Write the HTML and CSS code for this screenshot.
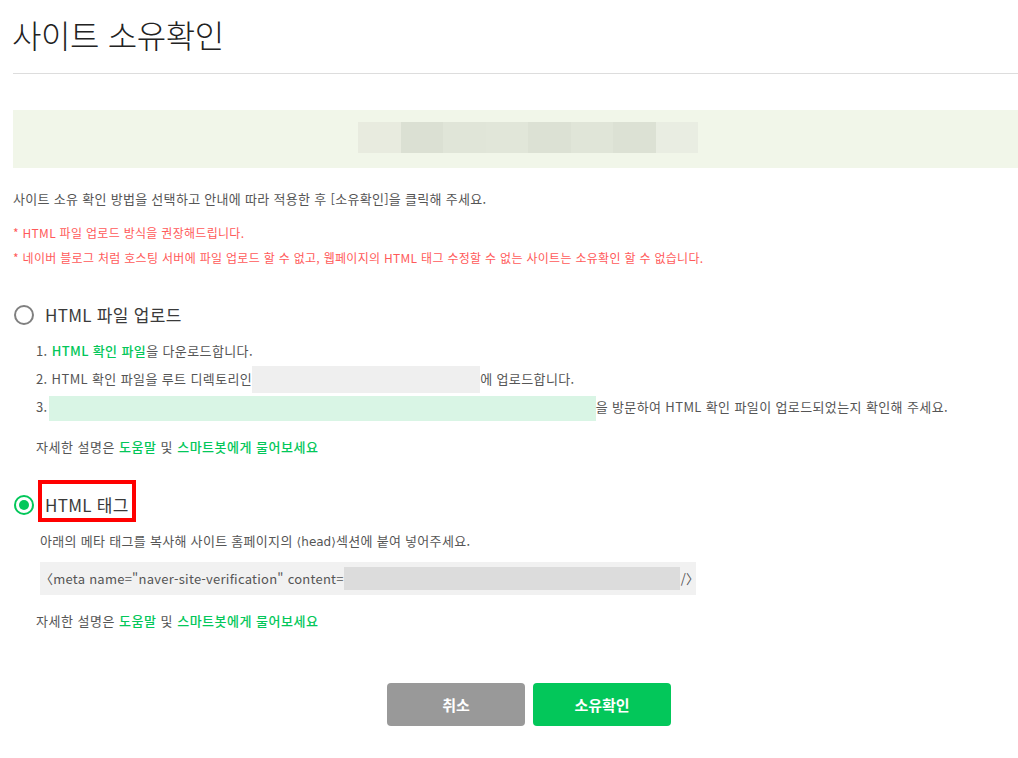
FILE: index.html
```html
<!DOCTYPE html>
<html lang="ko">
<head>
<meta charset="utf-8">
<title>사이트 소유확인</title>
<link rel="stylesheet" href="styles.css">
</head>
<body>
<div class="page">
  <h1 class="title">사이트 소유확인</h1>
  <div class="rule"></div>
  <div class="banner">
    <div class="blur blur-banner">
      <span class="seg s1"></span><span class="seg s2"></span><span class="seg s3"></span><span class="seg s4"></span><span class="seg s5"></span><span class="seg s6"></span><span class="seg s7"></span><span class="seg s8"></span>
    </div>
  </div>
  <p class="desc">사이트 소유 확인 방법을 선택하고 안내에 따라 적용한 후 [소유확인]을 클릭해 주세요.</p>
  <div class="notes">
    <p class="note">* HTML 파일 업로드 방식을 권장해드립니다.</p>
    <p class="note">* 네이버 블로그 처럼 호스팅 서버에 파일 업로드 할 수 없고, 웹페이지의 HTML 태그 수정할 수 없는 사이트는 소유확인 할 수 없습니다.</p>
  </div>

  <div class="option first">
    <span class="radio"></span>
    <span class="opt-label">HTML 파일 업로드</span>
  </div>
  <ol class="steps">
    <li>1. <b class="g">HTML 확인 파일</b>을 다운로드합니다.</li>
    <li>2. HTML 확인 파일을 루트 디렉토리인<span class="blur blur-path"></span>에 업로드합니다.</li>
    <li>3. <span class="blur blur-url"></span>을 방문하여 HTML 확인 파일이 업로드되었는지 확인해 주세요.</li>
  </ol>
  <p class="help">자세한 설명은 <b class="g">도움말</b> 및 <b class="g">스마트봇에게 물어보세요</b></p>

  <div class="option second">
    <span class="radio checked"></span>
    <span class="opt-label marked">HTML 태그</span>
  </div>
  <p class="instr">아래의 메타 태그를 복사해 사이트 홈페이지의 <span class="ang">⟨head⟩</span>섹션에 붙여 넣어주세요.</p>
  <div class="code">〈meta name="naver-site-verification" content=<span class="blur blur-code"></span>/〉</div>
  <p class="help help2">자세한 설명은 <b class="g">도움말</b> 및 <b class="g">스마트봇에게 물어보세요</b></p>

  <div class="actions">
    <button class="btn cancel" type="button">취소</button>
    <button class="btn confirm" type="button">소유확인</button>
  </div>
</div>
</body>
</html>
```

FILE: styles.css
```css
*, *::before, *::after { box-sizing: border-box; }
html, body { margin: 0; padding: 0; background: #fff; }
body {
  font-family: "Noto Sans CJK KR", "Noto Sans", sans-serif;
  color: #555;
  width: 1018px;
  height: 758px;
  overflow: hidden;
}
p { margin: 0; }
.page { padding: 14px 0 0 13px; }

.title {
  margin: 0 0 0 -1px;
  font-size: 32px;
  line-height: 40px;
  font-weight: 300;
  color: #222;
  letter-spacing: -0.4px;
}
.rule { margin-top: 19px; height: 1px; background: #dddddd; }

.banner {
  margin-top: 36px;
  height: 58px;
  background: #f1f6e9;
  padding: 12px 0 0 345px;
}
.blur { display: inline-block; vertical-align: middle; }
.blur-banner { display: flex; width: 340px; height: 31px; }
.seg { flex: 1; height: 100%; }
.s1 { background: #e8ebdf; }
.s2 { background: #dbe0d3; }
.s3 { background: #e0e5d8; }
.s4 { background: #e1e6d9; }
.s5 { background: #dce1d4; }
.s6 { background: #e0e5d8; }
.s7 { background: #dce1d4; }
.s8 { background: #e9ede2; }

.desc {
  margin-top: 21px;
  font-size: 13px;
  line-height: 20px;
  color: #555;
  letter-spacing: 0.3px;
}
.notes { margin-top: 11px; }
.note {
  font-size: 12px;
  line-height: 25px;
  color: #ff5a5a;
  letter-spacing: 0.3px;
}

.option {
  display: flex;
  align-items: center;
  height: 30px;
  padding-left: 1px;
}
.option.first { margin-top: 30px; }
.option.second { margin-top: 29px; }
.radio {
  width: 20px;
  height: 20px;
  border-radius: 50%;
  border: 2px solid #808080;
  flex: none;
  position: relative;
}
.radio.checked { border-color: #03c75a; }
.radio.checked::after {
  content: "";
  position: absolute;
  left: 3px; top: 3px;
  width: 10px; height: 10px;
  border-radius: 50%;
  background: #03c75a;
}
.opt-label {
  margin-left: 11px;
  font-size: 17px;
  line-height: 30px;
  color: #3a3a3a;
  letter-spacing: 0.3px;
}
.marked { position: relative; }
.marked::after {
  content: "";
  position: absolute;
  left: -7px;
  top: -10px;
  width: 98px;
  height: 42px;
  border: 4px solid #ff0000;
}

.steps {
  list-style: none;
  margin: 7px 0 0;
  padding: 0 0 0 23px;
  font-size: 13px;
  line-height: 28px;
  color: #555;
  letter-spacing: 0.38px;
}
.steps li { white-space: nowrap; height: 28px; }
.g { color: #03c75a; font-weight: 500; }
.blur-path { width: 228px; height: 27px; background: #efefef; margin-top: -2px; }
.blur-url { width: 547px; height: 25px; background: #d9f5e5; margin-left: -3px; }

.help {
  margin-top: 12px;
  padding-left: 23px;
  font-size: 13px;
  line-height: 28px;
  color: #555;
  letter-spacing: 0.5px;
}
.help2 { margin-top: 12px; }

.instr {
  margin-top: 11px;
  padding-left: 27px;
  font-size: 13px;
  line-height: 20px;
  color: #555;
  letter-spacing: 0.3px;
}
.ang { font-family: "DejaVu Sans", sans-serif; font-size: 12px; letter-spacing: 0; }
.code {
  margin: 10px 0 0 27px;
  width: 656px;
  height: 33px;
  background: #f1f1f1;
  padding-left: 0;
  font-size: 13px;
  line-height: 33px;
  color: #555;
  white-space: nowrap;
  letter-spacing: 0.25px;
}
.blur-code { width: 336px; height: 23px; background: #dcdcdc; margin: -3px 1px 0 0; }

.actions {
  margin-top: 48px;
  display: flex;
  gap: 8px;
  padding-left: 374px;
}
.btn {
  width: 138px;
  height: 43px;
  border: 0;
  border-radius: 4px;
  font-family: inherit;
  font-size: 15px;
  font-weight: 700;
  color: #fff;
  padding: 0;
}
.cancel { background: #999999; }
.confirm { background: #03c75a; }
```
